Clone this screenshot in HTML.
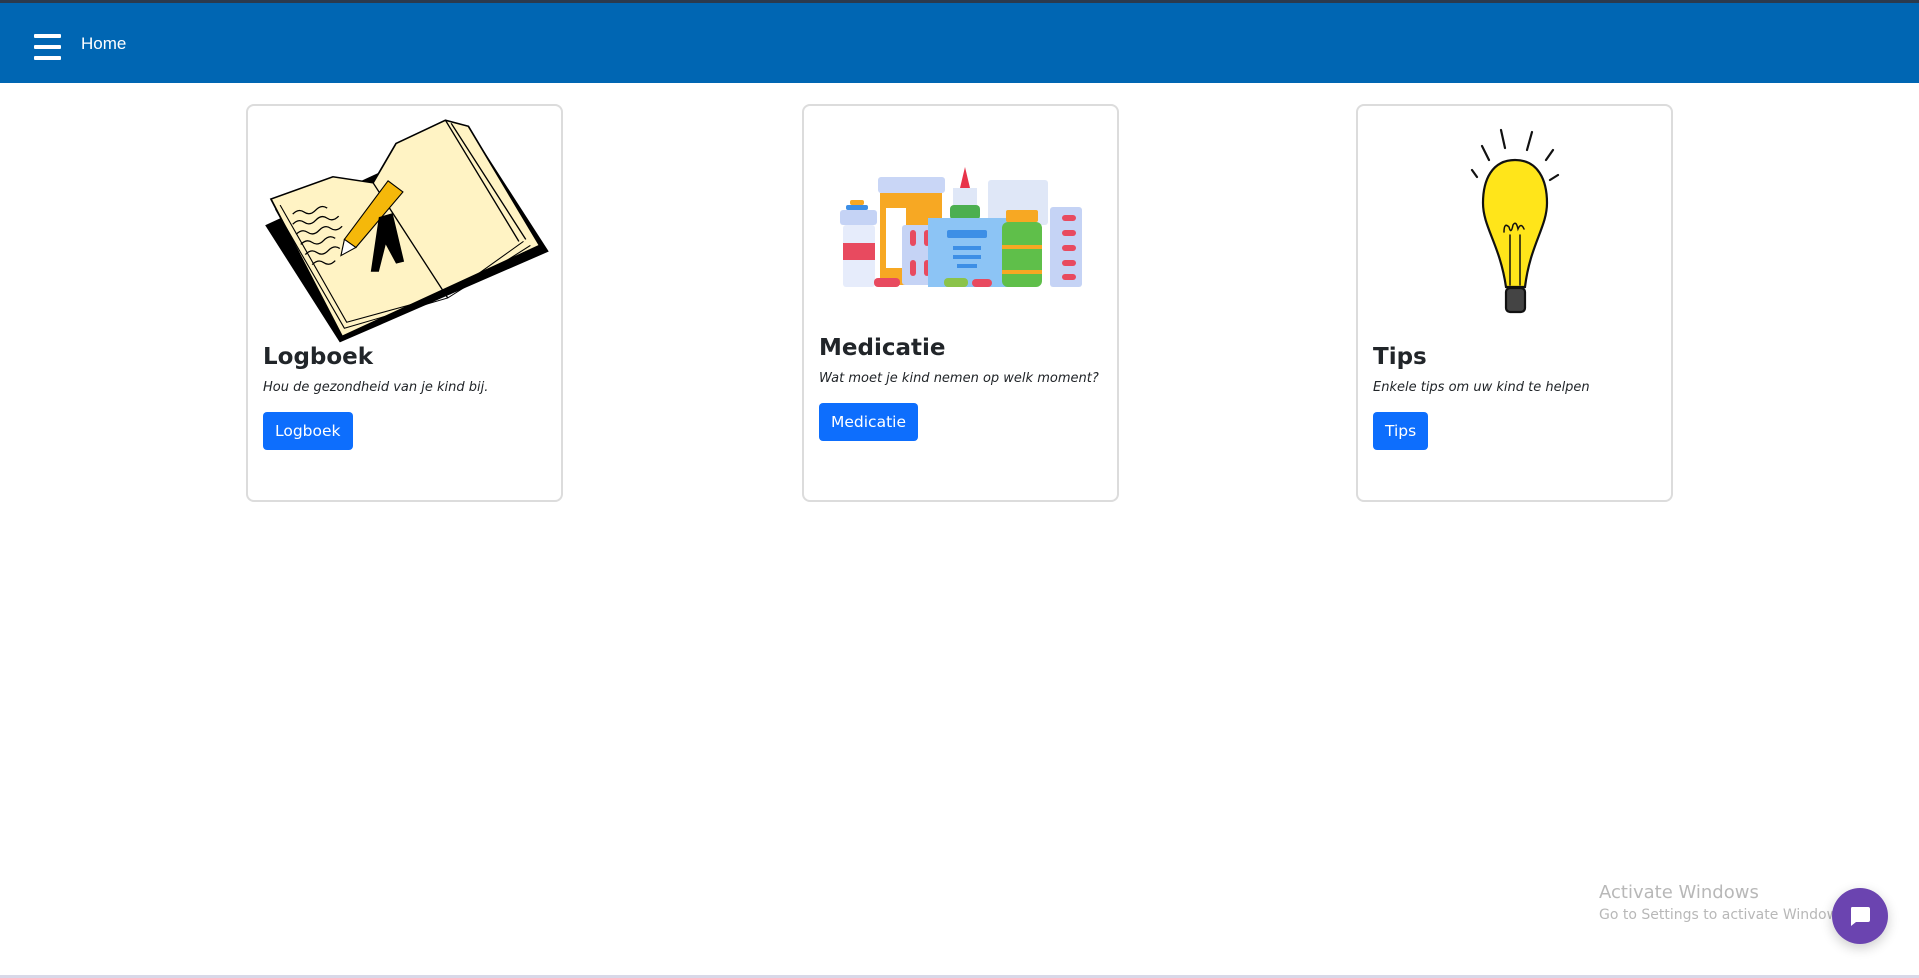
<!DOCTYPE html>
<html><head><meta charset="utf-8"><style>
*{margin:0;padding:0;box-sizing:border-box}
body{width:1919px;height:978px;background:#fff;position:relative;overflow:hidden;font-family:"Liberation Sans","DejaVu Sans",sans-serif}
.top{position:absolute;left:0;top:0;width:1919px;height:3px;background:#2b3a4d}
.nav{position:absolute;left:0;top:3px;width:1919px;height:80px;background:#0066b3}
.ham{position:absolute;left:34px;width:27px;height:4px;background:#fff;border-radius:1px}
.home{position:absolute;left:81px;top:31px;color:#fff;font-size:17px}
.card{position:absolute;top:104px;width:317px;height:398px;border:2px solid #dcdcdc;border-radius:8px}
.t{position:absolute;left:15px;font-family:"DejaVu Sans",sans-serif;font-weight:bold;font-size:23px;color:#212529}
.d{position:absolute;left:15px;font-family:"DejaVu Sans",sans-serif;font-style:italic;font-size:13px;color:#212529;white-space:nowrap}
.b{position:absolute;left:15px;height:38px;background:#0d6efd;color:#fff;border-radius:4px;font-family:"DejaVu Sans",sans-serif;font-size:15.5px;line-height:38px;padding:0 12px}
svg{position:absolute}
.aw{position:absolute;left:1599px;color:#b8b8b8;font-family:"DejaVu Sans",sans-serif}
.chat{position:absolute;left:1832px;top:888px;width:56px;height:56px;border-radius:50%;background:#6b44b0;box-shadow:0 4px 12px rgba(0,0,0,.2)}
</style></head><body>
<div class="top"></div>
<div class="nav">
<div class="ham" style="top:31px"></div><div class="ham" style="top:42px"></div><div class="ham" style="top:53px"></div>
<div class="home">Home</div>
</div>

<div class="card" style="left:246px">
<div class="t" style="top:238px">Logboek</div>
<div class="d" style="top:274px">Hou de gezondheid van je kind bij.</div>
<div class="b" style="top:306px">Logboek</div>
</div>
<div class="card" style="left:802px">
<div class="t" style="top:229px">Medicatie</div>
<div class="d" style="top:265px">Wat moet je kind nemen op welk moment?</div>
<div class="b" style="top:297px">Medicatie</div>
</div>
<div class="card" style="left:1356px">
<div class="t" style="top:238px">Tips</div>
<div class="d" style="top:274px">Enkele tips om uw kind te helpen</div>
<div class="b" style="top:306px">Tips</div>
</div>

<svg style="left:0;top:0" width="1919" height="978" viewBox="0 0 1919 978">
<g transform="matrix(1.148 0 0 1.01 0 -3)">
<polygon points="231,226 296,342 478,252 410,132" fill="#000"/>
<polygon points="236,200 298,336 470,246 408,128 388,122 345,145 325,184 290,178" fill="#fff3c4" stroke="#000" stroke-width="1.5"/>
<polyline points="240,210 300,328 390,298 462,246" fill="none" stroke="#000" stroke-width="1"/>
<polyline points="244,206 302,322 392,294 456,242" fill="none" stroke="#000" stroke-width="1"/>
<path d="M325,184 L390,298 M388,122 L452,242 M393,125 L458,240" stroke="#000" stroke-width="1.2" fill="none"/>
<path d="M255,215 q5,-6 10,-2 t10,-2 t10,-2 M255,225 q5,-6 10,-2 t10,-2 t10,-2 t10,-2 M258,235 q5,-6 10,-2 t10,-2 t10,-2 t10,-2 M262,245 q5,-6 10,-2 t10,-2 t10,-2 M266,255 q5,-6 10,-2 t10,-2 t10,-2 M272,265 q5,-6 10,-2 t10,-2" stroke="#000" stroke-width="1.2" fill="none"/>
<polygon points="338,182 351,193 310,248 300,240" fill="#f5b80a" stroke="#000" stroke-width="1"/>
<polygon points="300,240 310,248 297,256" fill="#fff" stroke="#000"/>
<polygon points="330,218 342,214 352,262 345,264 336,245 330,272 323,272" fill="#000"/>
</g>
<g transform="translate(810,110)">
<rect x="40" y="90" width="14" height="5" rx="2" fill="#f7a823"/>
<rect x="36" y="95" width="22" height="5" rx="2" fill="#3d8fe6"/>
<rect x="30" y="100" width="37" height="15" rx="3" fill="#c5d3f5"/>
<rect x="33" y="115" width="32" height="62" rx="3" fill="#e6ecfb"/>
<rect x="33" y="133" width="32" height="17" fill="#e84a5f"/>
<rect x="68" y="67" width="67" height="16" rx="3" fill="#c9d6f6"/>
<rect x="70" y="83" width="62" height="92" fill="#f7a823"/>
<rect x="76" y="98" width="20" height="60" fill="#fff"/>
<polygon points="150,78 155,57 160,78" fill="#e8334a"/>
<rect x="143" y="78" width="24" height="17" fill="#dfe7f7"/>
<rect x="140" y="95" width="30" height="15" rx="4" fill="#4caf50"/>
<rect x="178" y="70" width="60" height="45" rx="3" fill="#dfe7f7"/>
<rect x="92" y="115" width="38" height="60" rx="3" fill="#c5d3f5"/>
<rect x="100" y="120" width="6" height="16" rx="3" fill="#e84a5f"/><rect x="114" y="120" width="6" height="16" rx="3" fill="#e84a5f"/>
<rect x="100" y="150" width="6" height="16" rx="3" fill="#e84a5f"/><rect x="114" y="150" width="6" height="16" rx="3" fill="#e84a5f"/>
<rect x="118" y="108" width="80" height="69" fill="#8cc4f5"/>
<rect x="137" y="120" width="40" height="8" rx="2" fill="#3d8fe6"/>
<rect x="143" y="136" width="28" height="4" fill="#3d8fe6"/><rect x="143" y="145" width="28" height="4" fill="#3d8fe6"/><rect x="147" y="154" width="20" height="4" fill="#3d8fe6"/>
<rect x="196" y="100" width="32" height="12" rx="2" fill="#f7a823"/>
<rect x="192" y="112" width="40" height="65" rx="6" fill="#5fbf4a"/>
<rect x="192" y="135" width="40" height="4" fill="#f7a823"/><rect x="192" y="160" width="40" height="4" fill="#f7a823"/>
<rect x="240" y="97" width="32" height="80" rx="3" fill="#c5d3f5"/>
<g fill="#e84a5f"><rect x="252" y="105" width="14" height="6" rx="3"/><rect x="252" y="120" width="14" height="6" rx="3"/><rect x="252" y="135" width="14" height="6" rx="3"/><rect x="252" y="150" width="14" height="6" rx="3"/><rect x="252" y="164" width="14" height="6" rx="3"/></g>
<rect x="134" y="168" width="24" height="9" rx="4" fill="#8bc34a"/><rect x="162" y="169" width="20" height="8" rx="4" fill="#e84a5f"/>
<rect x="64" y="168" width="26" height="9" rx="4" fill="#e84a5f"/>
</g>
<g transform="translate(1440,115)" stroke="#111" stroke-width="2.2" fill="none" stroke-linecap="round">
<path d="M32,55 L37,62 M42,31 L49,45 M61,15 L65,33 M92,17 L87,35 M113,35 L106,45 M118,60 L110,65"/>
<path d="M75,45 C52,45 43,65 43,88 C43,112 60,130 66,172 L85,172 C90,130 107,112 107,88 C107,65 98,45 75,45 Z" fill="#ffe51a"/>
<path d="M70,170 L70,120 M80,170 L80,120 M64,117 q0,-10 5,-5 q2,8 4,-2 q3,-5 5,4 q3,-7 6,0" stroke-width="1.5"/>
<rect x="66" y="173" width="19" height="24" rx="4" fill="#444"/>
</g>
</svg>

<div class="aw" style="top:882px;font-size:18px">Activate Windows</div>
<div class="aw" style="top:907px;font-size:14px">Go to Settings to activate Windows.</div>
<div class="chat"><svg style="left:17px;top:17px" width="22" height="22" viewBox="0 0 22 22"><path d="M3,2 H19 Q21,2 21,4 V15 Q21,17 19,17 H7 L2,21 V4 Q2,2 3,2Z" fill="#fff"/></svg></div>
<div style="position:absolute;left:0;top:975px;width:1919px;height:3px;background:#d8d8e8"></div>
</body></html>
